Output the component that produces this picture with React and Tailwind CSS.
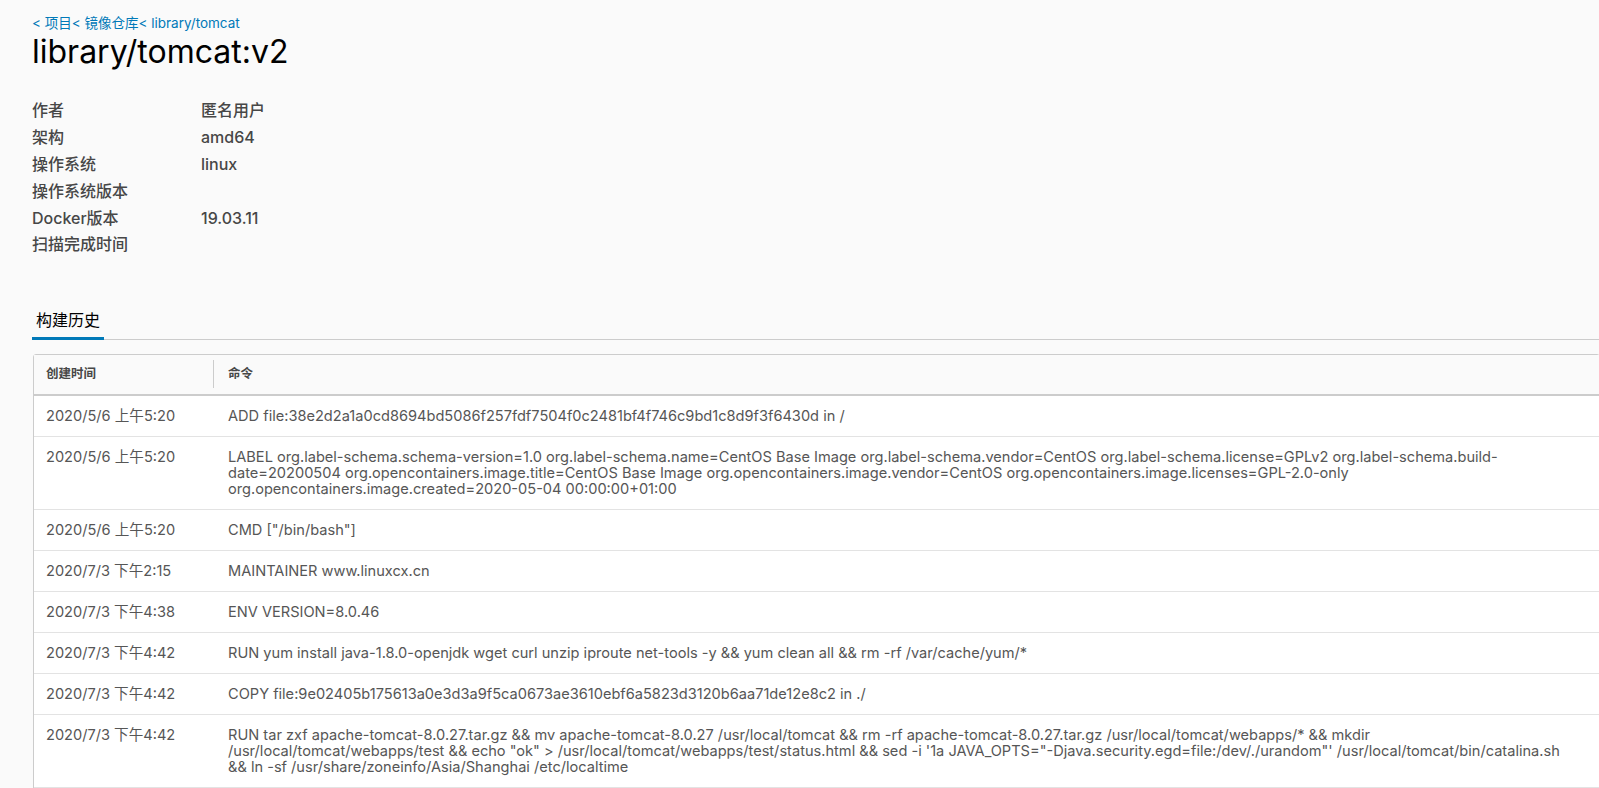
const FONT = "Inter, 'Noto Sans CJK SC', sans-serif";

const props = [
  ['作者', '匿名用户'],
  ['架构', 'amd64'],
  ['操作系统', 'linux'],
  ['操作系统版本', ''],
  ['Docker版本', '19.03.11'],
  ['扫描完成时间', ''],
];

const history = [
  ['2020/5/6 上午5:20', 'ADD file:38e2d2a1a0cd8694bd5086f257fdf7504f0c2481bf4f746c9bd1c8d9f3f6430d in /'],
  ['2020/5/6 上午5:20', 'LABEL org.label-schema.schema-version=1.0 org.label-schema.name=CentOS Base Image org.label-schema.vendor=CentOS org.label-schema.license=GPLv2 org.label-schema.build-date=20200504 org.opencontainers.image.title=CentOS Base Image org.opencontainers.image.vendor=CentOS org.opencontainers.image.licenses=GPL-2.0-only org.opencontainers.image.created=2020-05-04 00:00:00+01:00'],
  ['2020/5/6 上午5:20', 'CMD ["/bin/bash"]'],
  ['2020/7/3 下午2:15', 'MAINTAINER www.linuxcx.cn'],
  ['2020/7/3 下午4:38', 'ENV VERSION=8.0.46'],
  ['2020/7/3 下午4:42', 'RUN yum install java-1.8.0-openjdk wget curl unzip iproute net-tools -y && yum clean all && rm -rf /var/cache/yum/*'],
  ['2020/7/3 下午4:42', 'COPY file:9e02405b175613a0e3d3a9f5ca0673ae3610ebf6a5823d3120b6aa71de12e8c2 in ./'],
  ['2020/7/3 下午4:42', 'RUN tar zxf apache-tomcat-8.0.27.tar.gz && mv apache-tomcat-8.0.27 /usr/local/tomcat && rm -rf apache-tomcat-8.0.27.tar.gz /usr/local/tomcat/webapps/* && mkdir /usr/local/tomcat/webapps/test && echo "ok" > /usr/local/tomcat/webapps/test/status.html && sed -i \'1a JAVA_OPTS="-Djava.security.egd=file:/dev/./urandom"\' /usr/local/tomcat/bin/catalina.sh && ln -sf /usr/share/zoneinfo/Asia/Shanghai /etc/localtime'],
];

export default function App() {
  return (
    <div className="h-screen overflow-hidden bg-[#fafafa] text-[#565656]" style={{ fontFamily: FONT }}>
      <div className="pl-8 pt-[14px]">
        <div className="text-[13.5px] leading-[18px] text-[#0079b8]">
          <span>&lt; 项目</span><span>&lt; 镜像仓库</span><span>&lt; library/tomcat</span>
        </div>
        <h2 className="text-[32px] leading-[40px] font-normal text-black">library/tomcat:v2</h2>

        <div className="mt-[25px] flex flex-col">
          {props.map(([k, v]) => (
            <div key={k} className="flex h-[26.8px] items-center text-[16px] font-medium text-[#474747]">
              <div className="w-[169px] shrink-0">{k}</div>
              <div>{v}</div>
            </div>
          ))}
        </div>

        <div className="mt-[46px] flex border-b border-[#cccccc]">
          <div className="-mb-px flex h-[36px] items-center border-b-[3px] border-[#0079b8] px-[4px] text-[16px] text-black">
            构建历史
          </div>
        </div>

        <div className="mt-[14px] ml-px w-[1567px] rounded-t-[3px] border border-[#cccccc] bg-white">
          <div className="flex h-[41px] items-center border-b-2 border-[#cccccc] bg-[#fafafa] text-[12.5px] font-bold text-[#474747]">
            <div className="w-[179px] shrink-0 px-3">创建时间</div>
            <div className="h-[28px] w-px bg-[#cccccc]" />
            <div className="px-[14px]">命令</div>
          </div>
          {history.map(([t, cmd], i) => (
            <div key={i} className="flex border-b border-[#e3e3e3] text-[14.6px] leading-4">
              <div className="w-[179px] shrink-0 px-3 py-3">{t}</div>
              <div className="min-w-0 flex-1 py-3 pl-[15px] pr-[18px] break-words">{cmd}</div>
            </div>
          ))}
          <div className="h-[40px]" />
        </div>
      </div>
    </div>
  );
}
